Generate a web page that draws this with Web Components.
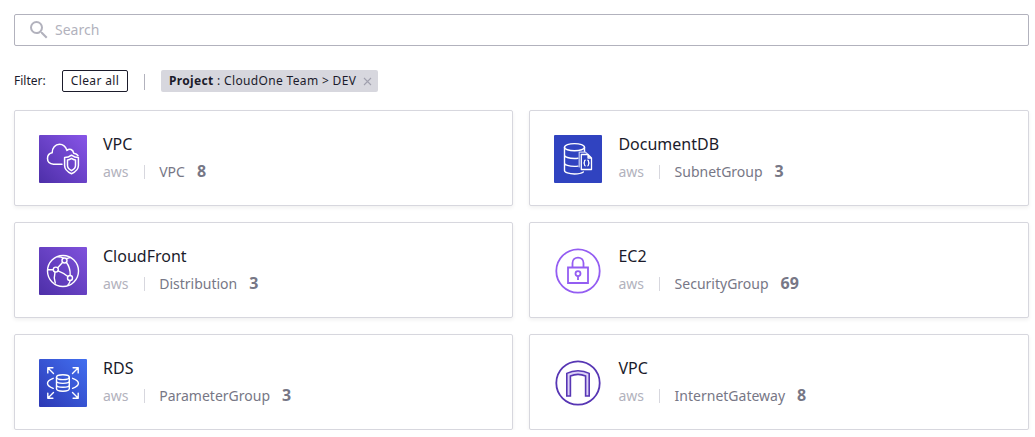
<!DOCTYPE html>
<html lang="en">
<head>
<meta charset="utf-8">
<title>Cloud services</title>
<style>
html, body { margin: 0; background: #fff; }
body { font-family: "Noto Sans", sans-serif; color: #1b1b2b; overflow: hidden; }
</style>
</head>
<body>
<service-page></service-page>
<script>
const stroke = (color, body, w = 1.5) => `<g fill="none" stroke="${color}" stroke-width="${w}" stroke-linejoin="round" stroke-linecap="round">${body}</g>`;
const tile = (a, b, body) => `<defs><linearGradient id="g" x1="0" y1="1" x2="1" y2="0"><stop offset="0" stop-color="${a}"/><stop offset="1" stop-color="${b}"/></linearGradient></defs><rect width="48" height="48" rx="1" fill="url(#g)"/>${body}`;
const ICONS = {
  vpc: tile('#4d2fa8', '#8855e8', stroke('#fff', `
    <path d="M23 29.2H14.5C10.8 29 8.5 26.8 8.5 23.6C8.5 20.5 10.4 18.3 13.2 17.8C13 13 16.3 9.3 20.5 9.3C24 9.3 26.7 11.6 28 15.4C30.5 13.1 34.1 14.5 34.7 18.2C36.8 18.4 38.3 19.2 39 20.6"/>
    <path d="M32.5 20.2C30.2 22 28 22.6 25.6 22.6V30.5C25.6 34.6 28.6 36.9 32.5 38.7C36.4 36.9 39.4 34.6 39.4 30.5V22.6C37 22.6 34.8 22 32.5 20.2Z"/>
    <path d="M32.5 23.4C31 24.5 29.9 24.9 28.5 25V30.5C28.5 33 30 34.3 32.5 35.7C35 34.3 36.5 33 36.5 30.5V25C35.1 24.9 34 24.5 32.5 23.4Z"/>`, 1.5)),
  docdb: tile('#3043c0', '#3043c0', stroke('#fff', `
    <ellipse cx="20.5" cy="12.2" rx="10" ry="3.6"/>
    <path d="M10.5 12.2V35.4C10.5 37.4 15 39 20.5 39C24 39 27.5 38.3 29.4 37M30.5 12.2V16.5M10.5 20C10.5 22 15 23.5 20.5 23.5C21.8 23.5 23 23.4 24 23.2M10.5 27.9C10.5 29.8 15 31.4 20.5 31.4C21.8 31.4 23 31.3 24 31.1"/>`, 1.4)
    + stroke('#c9d0f6', `<path d="M25.2 32V17.2H31.5L34 19.5"/>`, 1.2)
    + stroke('#fff', `<path d="M27.3 19.5H34L37.5 23V34.5H27.3ZM34 19.8V23H37.2"/>
    <path d="M31.2 25.2C29.9 25.2 30.9 28 29.9 28C30.9 28 29.9 30.8 31.2 30.8M33.8 25.2C35.1 25.2 34.1 28 35.1 28C34.1 28 35.1 30.8 33.8 30.8"/>`, 1.3)),
  cdn: tile('#4d2fa8', '#8052dc', stroke('#fff', `
    <circle cx="24" cy="24" r="15.5"/>
    <circle cx="25.5" cy="13.5" r="2.5"/><circle cx="16.8" cy="22.6" r="2.5"/><circle cx="31" cy="31" r="2.5"/>
    <path d="M23.7 15.3L18.7 20.7M19.1 23.8C22.6 25.1 25.8 27 28.9 29.5M27.3 15.3C30.2 19 31.4 23.5 31.2 28.4M9 22.7H14.2M16 25.2C15 28.7 15.2 32.6 16.3 36M31.2 33.6C30.8 35.3 30 36.8 28.8 38.2M18.6 9.7C21 9.6 22.8 10.1 24.4 11.2M27.3 11.7L31.7 10.4"/>`, 1.4)),
  lock: `<g fill="none" stroke="#945df2" stroke-width="1.8">
    <circle cx="24" cy="24" r="21.7"/>
    <path d="M14 20.5H34V36H14ZM18.5 20.3V16C18.5 8.7 29.5 8.7 29.5 16V20.3M24 29.3V33"/>
    <circle cx="24" cy="26.6" r="2.5"/></g>`,
  rds: tile('#2c38b4', '#426ff0', stroke('#fff', `
    <ellipse cx="23.9" cy="18.2" rx="6.4" ry="2.4"/>
    <path d="M17.5 18.2V29.8C17.5 31.1 20.2 32.2 23.9 32.2C27.6 32.2 30.3 31.1 30.3 29.8V18.2M17.5 22.1C17.5 23.4 20.2 24.4 23.9 24.4C27.6 24.4 30.3 23.4 30.3 22.1M17.5 26C17.5 27.3 20.2 28.3 23.9 28.3C27.6 28.3 30.3 27.3 30.3 26"/>
    <path d="M14.2 19.3C10.5 20.7 8.5 22.5 8.5 24.3C8.5 26.2 10.5 28 14.2 29.4M33.6 19.3C37.3 20.7 39.4 22.5 39.4 24.3C39.4 26.2 37.3 28 33.6 29.4M8.8 13.9V8.8H13.9M9 9L14.5 14.5M34.1 8.8H39.2V13.9M39 9L33.5 14.5M8.8 34.1V39.2H13.9M9 39L14.5 33.5M34.1 39.2H39.2V34.1M39 39L33.5 33.5"/>`, 1.4)),
  gateway: `<circle cx="24" cy="24" r="21.7" fill="none" stroke="#5736b4" stroke-width="1.8"/>
    <path d="M12.8 37V14.4C19.5 10.8 28.5 10.8 35.2 14.4V37H31.6V17.1C26.5 14.8 21.5 14.8 16.4 17.1V37Z" fill="#dcd2f7" stroke="#5736b4" stroke-width="1.6"/>`
};
function define(name, render) {
  customElements.define(name, class extends HTMLElement {
    connectedCallback() {
      if (!this.shadowRoot) this.attachShadow({ mode: 'open' }).innerHTML = render(this);
    }
  });
}
define('service-icon', el => `
  <style>:host{display:block;width:48px;height:48px;flex:none}svg{display:block}</style>
  <svg width="48" height="48" viewBox="0 0 48 48">${ICONS[el.getAttribute('name')]}</svg>`);
define('search-field', () => `
  <style>
    :host{display:flex;align-items:center;box-sizing:border-box;height:32px;border:1px solid #b2b2bd;border-radius:2px;padding-left:12px;font-size:14px;line-height:20px;color:#b2b2bd}
    svg{margin-right:4px;flex:none}
  </style>
  <svg width="24" height="24" viewBox="0 0 24 24" fill="#b2b2bd"><path d="M15.5 14h-.79l-.28-.27A6.47 6.47 0 0 0 16 9.500 6.500 6.500 0 1 0 9.500 16c1.610 0 3.090-.59 4.230-1.570l.27.28v.79l5 4.990L20.490 19l-4.990-5zm-6 0C7.010 14 5 11.990 5 9.500S7.010 5 9.500 5 14 7.010 14 9.500 11.990 14 9.500 14z"/></svg>
  <slot></slot>`);
define('outline-button', () => `
  <style>:host{display:block;box-sizing:border-box;height:22px;width:66px;border:1px solid #1b1b2b;border-radius:2px;text-align:center;font-size:12px;line-height:20px;letter-spacing:.35px;white-space:nowrap}</style><slot></slot>`);
define('filter-tag', el => `
  <style>
    :host{display:flex;align-items:center;box-sizing:border-box;height:22px;width:217px;padding:0 6px 0 8px;justify-content:space-between;background:#d7d7de;border-radius:2px;font-size:12px;line-height:22px;white-space:nowrap}
    span{letter-spacing:.34px}
  </style>
  <span><b>${el.getAttribute('label')}</b> : <slot></slot></span>
  <svg width="9" height="9" viewBox="0 0 9 9" stroke="#a0a0ae" stroke-width="1.1"><path d="M1 1L8 8M8 1L1 8"/></svg>`);
define('filter-bar', () => `
  <style>
    :host{display:flex;align-items:center;height:22px;font-size:12px;line-height:22px}
    .label{width:48px}
    i{width:1px;height:16px;margin:2px 16px 0;background:#b2b2bd}
  </style>
  <span class="label">Filter:</span>
  <outline-button>Clear all</outline-button><i></i>
  <filter-tag label="Project">CloudOne Team &gt; DEV</filter-tag>`);
define('service-card', el => `
  <style>
    :host{display:flex;box-sizing:border-box;height:96px;padding:24px;border:1px solid #d7d7de;border-radius:2px;background:#fff;box-shadow:0 2px 4px rgba(0,0,0,.06)}
    .body{margin-left:16px;white-space:nowrap}
    .title{font-size:16px;line-height:18px}
    .meta{display:flex;align-items:center;margin-top:8px;font-size:14px;line-height:22px;color:#777786}
    .provider{color:#b2b2bd}
    i{width:1px;height:14px;margin:0 14.600px 0 15px;background:#d7d7de}
    b{margin-left:12px;font-size:16px;line-height:20px;margin-bottom:2px}
  </style>
  <service-icon name="${el.getAttribute('icon')}"></service-icon>
  <div class="body"><div class="title"><slot></slot></div>
  <div class="meta"><span class="provider">aws</span><i></i><span>${el.getAttribute('kind')}</span><b>${el.getAttribute('count')}</b></div></div>`);
define('service-page', () => `
  <style>
    :host{display:block;padding:14px 6px 0 14px}
    filter-bar{margin-top:24px}
    .grid{display:grid;grid-template-columns:499.450px 1fr;gap:16px;margin-top:18px}
  </style>
  <search-field>Search</search-field>
  <filter-bar></filter-bar>
  <div class="grid">
    <service-card icon="vpc" kind="VPC" count="8">VPC</service-card>
    <service-card icon="docdb" kind="SubnetGroup" count="3">DocumentDB</service-card>
    <service-card icon="cdn" kind="Distribution" count="3">CloudFront</service-card>
    <service-card icon="lock" kind="SecurityGroup" count="69">EC2</service-card>
    <service-card icon="rds" kind="ParameterGroup" count="3">RDS</service-card>
    <service-card icon="gateway" kind="InternetGateway" count="8">VPC</service-card>
  </div>`);
</script>
</body>
</html>
